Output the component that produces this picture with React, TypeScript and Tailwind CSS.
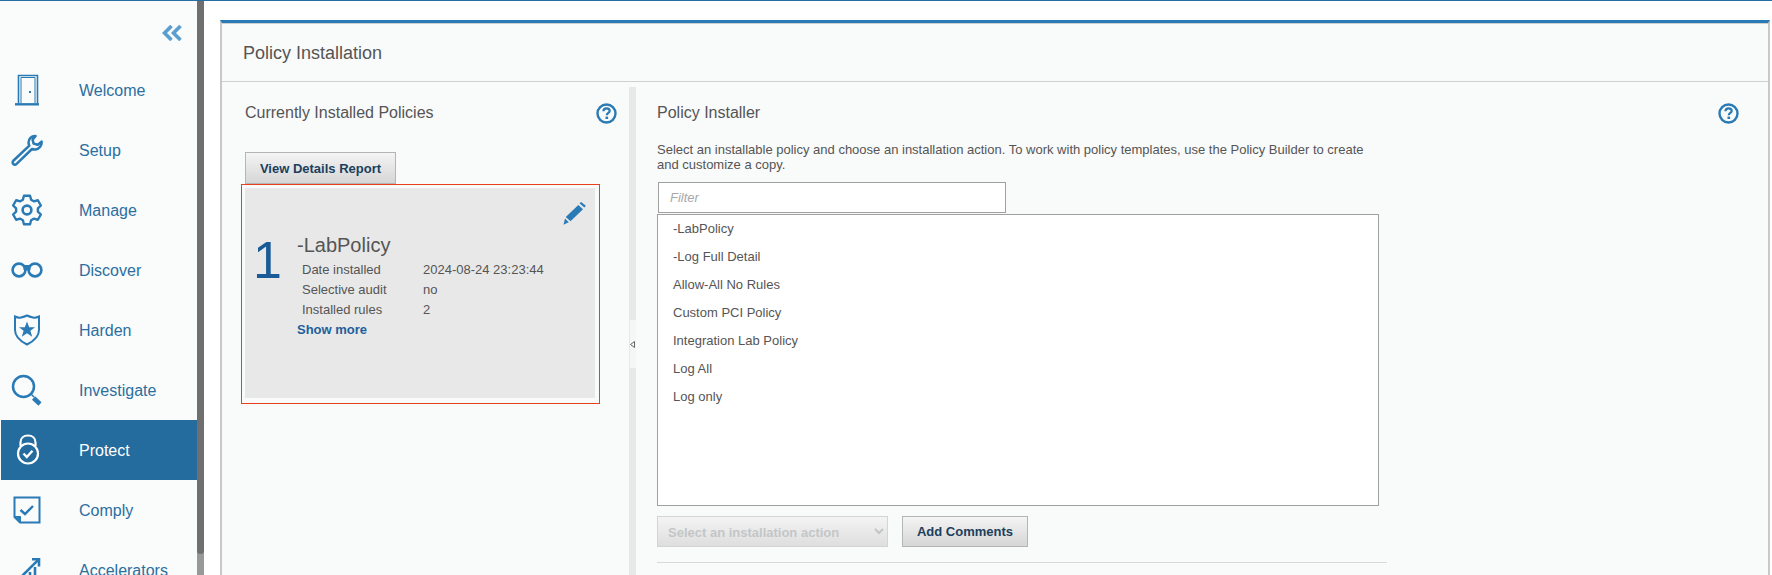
import React from "react";

const B = "#2a7ab5";

const gearPath = Array.from({ length: 6 })
  .map((_, i) => {
    const a = -90 + i * 60;
    const pts: [number, number][] = [
      [11, a - 22],
      [14.6, a - 12],
      [14.6, a + 12],
      [11, a + 22],
    ];
    return pts
      .map(([r, d]) => {
        const t = (d * Math.PI) / 180;
        return `${(16 + r * Math.cos(t)).toFixed(2)} ${(16 + r * Math.sin(t)).toFixed(2)}`;
      })
      .join(" L");
  })
  .join(" L");

function Door() {
  return (
    <svg width="26" height="32" viewBox="0 0 26 32" fill="none" stroke={B}>
      <path d="M4.5 29.5V1.5H23.5V29.5" strokeWidth="1.6" />
      <path d="M7 29V3.5H21V29" strokeWidth="1" />
      <path d="M1 30.3H25" strokeWidth="2.4" />
      <rect x="15" y="17" width="2" height="2" fill={B} stroke="none" />
    </svg>
  );
}
function Wrench() {
  return (
    <svg width="32" height="32" viewBox="0 0 32 32" fill="none" stroke={B} strokeWidth="2.5" strokeLinejoin="round">
      <path d="M24.5 2C20.5 1.8 17.2 5 17.6 9.2C17.7 10.2 17.9 11 18.3 11.7L2.6 26.5C1.2 27.9 1.4 29.2 2.3 30C3.2 30.8 4.5 30.8 5.6 29.8L21 15C22.2 15.5 23.4 15.7 24.6 15.5C28.4 15 31 11.5 30.6 7.6L26.8 10.8L22.6 9.6L21.6 5.8Z" />
    </svg>
  );
}
function Gear() {
  return (
    <svg width="32" height="32" viewBox="0 0 32 32" fill="none" stroke={B} strokeWidth="2.4" strokeLinejoin="round">
      <path d={`M${gearPath}Z`} />
      <circle cx="16" cy="16" r="4.4" strokeWidth="2.6" />
    </svg>
  );
}
function Glasses() {
  return (
    <svg width="32" height="16" viewBox="0 0 32 16" fill="none" stroke={B} strokeWidth="2.6">
      <circle cx="8" cy="8" r="6.4" />
      <circle cx="24" cy="8" r="6.4" />
      <path d="M13 3.5H19V8H13Z" fill={B} strokeWidth="1" />
    </svg>
  );
}
function Shield() {
  return (
    <svg width="28" height="32" viewBox="0 0 28 32" fill="none" stroke={B} strokeWidth="2">
      <path d="M2 2.5C5 4 6 4 8 3.5C10.5 3 12 2.5 14 1.5C16 2.5 17.5 3 20 3.5C22 4 23 4 26 2.5V16C26 23 19 28 14 30.5C9 28 2 23 2 16Z" />
      <path d="M14 7.5L16.2 13.2H22L17.4 16.8L19.2 22.8L14 19.3L8.8 22.8L10.6 16.8L6 13.2H11.8Z" fill={B} stroke="none" />
    </svg>
  );
}
function Search() {
  return (
    <svg width="32" height="32" viewBox="0 0 32 32" fill="none" stroke={B}>
      <circle cx="12.5" cy="12.5" r="10.5" strokeWidth="2.5" />
      <path d="M20.5 20.5L23 23" strokeWidth="1.5" />
      <path d="M22.5 24L29 30" strokeWidth="4.5" />
    </svg>
  );
}
function Lock() {
  return (
    <svg width="24" height="32" viewBox="0 0 24 32" fill="none" stroke="#fff" strokeWidth="2.2">
      <path d="M4.5 12V8.5C4.5 4.5 7.5 1.5 12 1.5C16.5 1.5 19.5 4.5 19.5 8.5V12" />
      <circle cx="12" cy="19.5" r="10" />
      <path d="M7.5 19.5L10.8 23L16.5 16.8" strokeWidth="2.4" />
    </svg>
  );
}
function Comply() {
  return (
    <svg width="28" height="28" viewBox="0 0 28 28" fill="none" stroke={B} strokeWidth="2">
      <path d="M1.5 1.5H26.5V26.5H7L1.5 21Z" />
      <path d="M2 20.5H7.5V26" fill={B} strokeWidth="1" />
      <path d="M7.5 14L12 18L20 10" strokeWidth="2.4" />
    </svg>
  );
}
function Accel() {
  return (
    <svg width="28" height="28" viewBox="0 0 28 28" fill="none" stroke={B} strokeWidth="2.6">
      <path d="M19 3.2H26V10.5" />
      <path d="M26 3.2L6 23" />
      <path d="M17 16V28" />
      <path d="M22 11V28" />
    </svg>
  );
}
function Help() {
  return (
    <svg width="21" height="21" viewBox="0 0 21 21" fill="none" stroke={B}>
      <circle cx="10.5" cy="10.5" r="9" strokeWidth="2.4" />
      <path d="M7.4 8.2C7.5 6.3 8.8 5.3 10.6 5.3C12.4 5.3 13.7 6.4 13.7 7.9C13.7 9.9 10.8 10 10.8 12.3" strokeWidth="2.2" />
      <rect x="9.5" y="13.6" width="2.6" height="2.4" fill={B} stroke="none" />
    </svg>
  );
}
function Pencil() {
  return (
    <svg width="23" height="23" viewBox="0 0 23 23" fill={B}>
      <path d="M16.5 1.2L18.2 0L22.8 3.8L21.4 5.5Z" />
      <path d="M15.3 3L20 7.2L7.5 19.2L2.8 15Z" />
      <path d="M2 16.5L5.8 20.2L0.5 22.8Z" />
    </svg>
  );
}

const items: [string, React.ReactNode][] = [
  ["Welcome", <Door />],
  ["Setup", <Wrench />],
  ["Manage", <Gear />],
  ["Discover", <Glasses />],
  ["Harden", <Shield />],
  ["Investigate", <Search />],
  ["Protect", <Lock />],
  ["Comply", <Comply />],
  ["Accelerators", <Accel />],
];

const policies = [
  "-LabPolicy",
  "-Log Full Detail",
  "Allow-All No Rules",
  "Custom PCI Policy",
  "Integration Lab Policy",
  "Log All",
  "Log only",
];

const details = [
  ["Date installed", "2024-08-24 23:23:44"],
  ["Selective audit", "no"],
  ["Installed rules", "2"],
];

const btn =
  "flex items-center justify-center border border-[#b5b5b5] bg-gradient-to-b from-[#f4f4f4] to-[#d6d6d6] pt-px text-[13px] font-bold text-[#1b3f5c]";

export default function App() {
  return (
    <div className="flex h-[575px] overflow-hidden border-t border-[#256ea3] bg-white font-['Liberation_Sans',Arial,sans-serif]">
      <nav className="w-[197px] shrink-0 bg-[#fafbfb]">
        <div className="flex h-[59px] justify-end pt-[24px] pr-[15px]">
          <svg width="20" height="16" viewBox="0 0 20 16" fill="none" stroke="#5a9fd0" strokeWidth="3.6">
            <path d="M9.5 1L2.5 8L9.5 15" />
            <path d="M18.5 1L11.5 8L18.5 15" />
          </svg>
        </div>
        {items.map(([label, icon]) => {
          const active = label === "Protect";
          return (
            <div
              key={label}
              className={
                "flex h-[60px] shrink-0 items-center text-base " +
                (active ? "ml-px bg-[#246c9e] text-white" : "text-[#2a6f9f]")
              }
            >
              <div className={"flex justify-center " + (active ? "w-[53px]" : "w-[54px]")}>{icon}</div>
              <span className="relative top-px ml-[25px]">{label}</span>
            </div>
          );
        })}
      </nav>
      <div className="flex w-[7px] shrink-0 flex-col bg-[#989898]">
        <div className="h-[553px] rounded-b-sm bg-[#6f6f6f]" />
      </div>
      <main className="min-w-0 flex-1 pt-[19px] pl-[16px]">
        <section className="h-[600px] w-[1550px] border-x-2 border-t-[3px] border-x-[#c8c8c8] border-t-[#2a7ab5] bg-[#f9fafa]">
          <header className="flex h-[59px] items-center border-t border-b border-[#cfcfcf] pl-[21px] text-lg text-[#555]">
            Policy Installation
          </header>
          <div className="flex pt-[5px]">
            <div className="w-[407px] shrink-0 pt-[14px] pl-[23px]">
              <div className="flex h-[24px] items-center justify-between pr-[12px] text-base text-[#555]">
                <span>Currently Installed Policies</span>
                <Help />
              </div>
              <button className={btn + " mt-[27px] h-[32px] w-[151px]"}>View Details Report</button>
              <div className="-ml-[4px] h-[220px] w-[359px] border border-[#e8401c] pt-[3px] pl-[3px]">
                <div className="relative flex h-[210px] w-[350px] bg-[#e8e8e8] pt-[45px] pl-[8px] text-[#555]">
                  <div className="mt-[2px] h-[50px] w-[44px] text-[52px] leading-[50px] text-[#1a5a96]">1</div>
                  <div>
                    <div className="h-[27px] text-xl leading-[24px]">-LabPolicy</div>
                    <div className="grid grid-cols-[121px_1fr] pl-[5px] text-[13px] leading-[20px]">
                      {details.map(([k, v]) => (
                        <React.Fragment key={k}>
                          <span>{k}</span>
                          <span>{v}</span>
                        </React.Fragment>
                      ))}
                    </div>
                    <a className="block text-[13px] leading-[20px] font-bold text-[#1f5f9c]">Show more</a>
                  </div>
                  <div className="absolute top-[14px] right-[9px]">
                    <Pencil />
                  </div>
                </div>
              </div>
            </div>
            <div className="relative h-[500px] w-[7px] shrink-0 bg-[#e8e8e8]">
              <div className="absolute top-[233px] left-[1px] flex h-[48px] w-[6px] items-center bg-[#f6f6f6]">
                <svg width="5" height="7" viewBox="0 0 5 7" fill="none" stroke="#666">
                  <path d="M4.5 0.5V6.5L0.5 3.5Z" />
                </svg>
              </div>
            </div>
            <div className="flex-1 pt-[14px] pl-[21px]">
              <div className="flex h-[24px] w-[1082px] items-center justify-between text-base text-[#555]">
                <span>Policy Installer</span>
                <Help />
              </div>
              <p className="mt-[17px] w-[730px] text-[13px] leading-[15px] text-[#555]">
                Select an installable policy and choose an installation action. To work with policy templates, use the
                Policy Builder to create and customize a copy.
              </p>
              <input
                placeholder="Filter"
                readOnly
                className="mt-[10px] ml-px block h-[31px] w-[348px] border border-[#a0a0a0] bg-white px-[11px] text-[13px] italic outline-none placeholder:text-[#a8a8a8]"
              />
              <ul className="mt-px h-[292px] w-[722px] border border-[#a0a0a0] bg-white pl-[15px] text-[13px] leading-[28px] text-[#555]">
                {policies.map((p) => (
                  <li key={p}>{p}</li>
                ))}
              </ul>
              <div className="mt-[10px] flex gap-[14px]">
                <select
                  disabled
                  className="h-[31px] w-[231px] border border-[#d4d4d4] bg-gradient-to-b from-[#f4f4f4] to-[#dedede] pt-px pl-[6px] text-[13px] font-bold text-[#c3c6c8]"
                >
                  <option>Select an installation action</option>
                </select>
                <button className={btn + " h-[31px] w-[126px]"}>Add Comments</button>
              </div>
              <hr className="mt-[15px] w-[730px] border-[#d8dada]" />
            </div>
          </div>
        </section>
      </main>
    </div>
  );
}
